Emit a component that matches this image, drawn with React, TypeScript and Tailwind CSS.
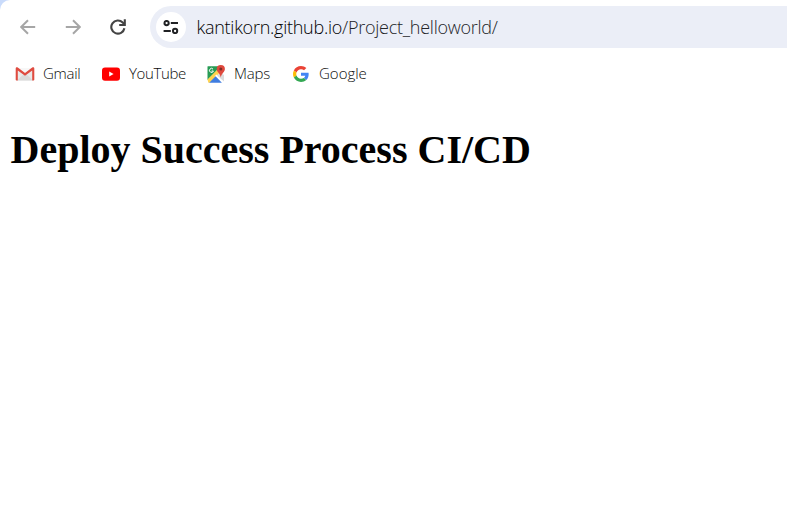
import type { ReactNode } from "react";

function ArrowLeft({ flip = false }: { flip?: boolean }) {
  return (
    <svg
      width="16"
      height="16"
      viewBox="0 0 16 16"
      fill="none"
      stroke="#a6a6a6"
      strokeWidth="2"
      className={flip ? "-scale-x-100" : ""}
    >
      <path d="M15.2 8H1.8M8 1.2 1.2 8 8 14.8" />
    </svg>
  );
}

function Reload() {
  return (
    <svg width="16" height="16" viewBox="0 0 16 16" fill="none" stroke="#444444" strokeWidth="2.1" className="ml-px">
      <path d="M14.4 9.2A6.6 6.6 0 1 1 12.7 3.5L14.5 5.4" />
      <path d="M14.8 0.2V6H9.2" />
    </svg>
  );
}

function Tune() {
  return (
    <svg width="16" height="14" viewBox="0 0 16 14" fill="none" stroke="#202124" strokeWidth="2">
      <circle cx="3.6" cy="3.1" r="2.15" />
      <path d="M7.8 3.1H15M0.6 11H7.8" />
      <circle cx="12.1" cy="11" r="2.15" />
    </svg>
  );
}

function GmailIcon() {
  return (
    <svg width="20" height="20" viewBox="0 0 20 20">
      <path d="M2 4h16v12.5H2z" fill="#e9e9e9" />
      <path d="M2 16.5 10 9l8 7.5z" fill="#dadada" />
      <path d="M3 4h14l-7 5.3z" fill="#f7f7f7" />
      <path
        d="M.7 4.5C.7 3.2 2 3 2.8 3.6L10 9l7.2-5.4c.8-.6 2.1-.4 2.1.9v11c0 .7-.4 1-1 1h-1.1V6.4L10 11.8 2.8 6.4v10.1H1.7c-.6 0-1-.3-1-1z"
        fill="#df4b40"
      />
    </svg>
  );
}

function YouTubeIcon() {
  return (
    <svg width="20" height="20" viewBox="0 0 20 20">
      <rect x="1" y="3.6" width="18" height="13.2" rx="3" fill="#f00" />
      <path d="M8.2 7.6v5l4.4-2.5z" fill="#fff" />
    </svg>
  );
}

function MapsIcon() {
  return (
    <svg width="20" height="20" viewBox="0 0 20 20">
      <path d="M1.5 2.6Q1.5 2.2 2 2.2H15L1.5 16z" fill="#279b54" />
      <path d="M1.5 15.6 12 5l2.7 2.8L3.8 18.7H2.4z" fill="#ffd34e" />
      <path d="m8.7 12.2 1.7-1.6 7 7.5-1 1z" fill="#fff" />
      <path d="m3.2 18.7 6.4-6.5 6.3 6.5z" fill="#3f7de0" />
      <path d="m11 11.6 4-3.9 3 3.5v6.3z" fill="#dcdcdc" />
      <path d="M7 5.1A2 2 0 1 0 7.4 7H5.6" fill="none" stroke="#fff" strokeWidth="1" />
      <path d="M14.8 1a4.1 4.1 0 0 0-4.1 4.1c0 3.1 3.5 4.2 4.1 8.5.6-4.3 4.1-5.4 4.1-8.5A4.1 4.1 0 0 0 14.8 1z" fill="#df493d" />
      <circle cx="14.8" cy="5.1" r="1.5" fill="#7d2c25" />
    </svg>
  );
}

function GoogleIcon() {
  return (
    <svg width="16" height="16" viewBox="0 0 48 48">
      <path fill="#EA4335" d="M24 9.5c3.54 0 6.71 1.22 9.21 3.6l6.85-6.85C35.9 2.38 30.47 0 24 0 14.62 0 6.51 5.38 2.56 13.22l7.98 6.19C12.43 13.72 17.74 9.5 24 9.5z" />
      <path fill="#4285F4" d="M46.98 24.55c0-1.57-.15-3.09-.38-4.55H24v9.02h12.94c-.58 2.96-2.26 5.48-4.78 7.18l7.73 6c4.51-4.18 7.09-10.36 7.09-17.65z" />
      <path fill="#FBBC05" d="M10.53 28.59c-.48-1.45-.76-2.99-.76-4.59s.27-3.14.76-4.59l-7.98-6.19C.92 16.46 0 20.12 0 24c0 3.88.92 7.54 2.56 10.78l7.97-6.19z" />
      <path fill="#34A853" d="M24 48c6.48 0 11.93-2.13 15.89-5.81l-7.73-6c-2.15 1.45-4.92 2.3-8.16 2.3-6.26 0-11.57-4.22-13.47-9.91l-7.98 6.19C6.51 42.62 14.62 48 24 48z" />
    </svg>
  );
}

function Bookmark({ icon, label, className }: { icon: ReactNode; label: string; className: string }) {
  return (
    <a className={`flex shrink-0 items-center text-[15px] font-light text-[#0c0c0c] ${className}`}>
      <span className="flex w-5 justify-center">{icon}</span>
      <span className="ml-2 whitespace-nowrap pb-0.5 leading-5">{label}</span>
    </a>
  );
}

export default function App() {
  return (
    <div className="h-[512px] w-[787px] overflow-hidden bg-[#c9dbfb]">
      <div className="h-full rounded-tl-[10px] bg-white font-['Open_Sans','Noto_Sans',sans-serif]">
        <div className="flex h-[54px] items-center">
          <div className="flex w-[150px] shrink-0 gap-[28.5px] pl-5">
            <ArrowLeft />
            <ArrowLeft flip />
            <Reload />
          </div>
          <div className="flex h-[42px] grow items-center rounded-l-full bg-[#ebeef7] pl-[6px]">
            <span className="flex size-[30px] items-center justify-center rounded-full bg-white">
              <Tune />
            </span>
            <span className="ml-[10.5px] whitespace-nowrap text-[18px] font-light leading-6 tracking-[-0.26px] text-[#222327]">
              <span className="text-black">kantikorn.github.io</span>/Project_helloworld/
            </span>
          </div>
        </div>
        <div className="flex h-10 items-center pl-[15px]">
          <Bookmark icon={<GmailIcon />} label="Gmail" className="w-[86px] tracking-[-0.3px]" />
          <Bookmark icon={<YouTubeIcon />} label="YouTube" className="w-[105px] tracking-[-0.35px]" />
          <Bookmark icon={<MapsIcon />} label="Maps" className="w-[85px] tracking-[-0.2px]" />
          <Bookmark icon={<GoogleIcon />} label="Google" className="w-[86px]" />
        </div>
        <h1 className="mt-[33px] pl-[10.5px] font-['Liberation_Serif',serif] text-[40px] font-bold leading-[46px] text-black">
          Deploy Success Process CI/CD
        </h1>
      </div>
    </div>
  );
}
